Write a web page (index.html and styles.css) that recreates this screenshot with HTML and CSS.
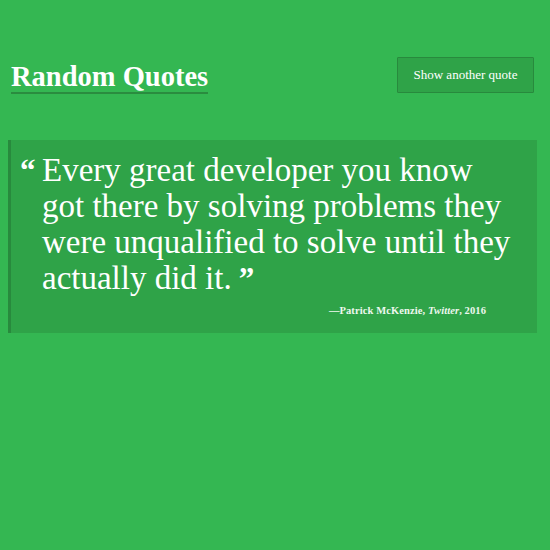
FILE: index.html
```html
<!DOCTYPE html>
<html lang="en">
<head>
<meta charset="utf-8">
<title>Random Quotes</title>
<link rel="stylesheet" href="styles.css">
</head>
<body>
<header class="top">
  <h1 class="title">Random Quotes</h1>
  <button class="btn" type="button">Show another quote</button>
</header>
<blockquote class="quote">
  <p class="quote-text"><span class="mark-open">“</span>Every great developer you know got there by solving problems they were unqualified to solve until they actually did it.<span class="mark-close">”</span></p>
  <footer class="cite">—Patrick McKenzie, <em>Twitter</em>, 2016</footer>
</blockquote>
</body>
</html>
```

FILE: styles.css
```css
html, body {
  margin: 0;
  padding: 0;
}
body {
  background: #34b752;
  color: #ffffff;
  font-family: "Liberation Serif", "DejaVu Serif", serif;
  width: 550px;
  height: 550px;
}
.top {
  display: flex;
  justify-content: space-between;
  align-items: flex-start;
  padding: 57px 16px 0 11px;
}
.title {
  margin: 5px 0 0 0;
  font-size: 28.5px;
  font-weight: bold;
  line-height: 30px;
  border-bottom: 2px solid #2a8c3f;
  padding-bottom: 0;
}
.btn {
  width: 137px;
  height: 36px;
  background: #2fa348;
  border: 1px solid #288a3d;
  border-radius: 1px;
  color: #ffffff;
  font-family: "Liberation Serif", "DejaVu Serif", serif;
  font-size: 13px;
  padding: 0;
}
.quote {
  margin: 46px 13px 0 8px;
  background: #2fa348;
  border-left: 3px solid #288a3d;
  padding: 12px 20px 17px 31px;
}
.quote-text {
  margin: 0;
  font-size: 33px;
  line-height: 36px;
}
.mark-open {
  display: inline-block;
  width: 22px;
  margin-left: -22px;
  font-weight: bold;
  font-size: 31px;
  line-height: 0;
}
.mark-close {
  font-weight: bold;
  font-size: 31px;
  line-height: 0;
  margin-left: 7px;
}
.cite {
  text-align: right;
  font-size: 10.5px;
  font-weight: bold;
  letter-spacing: 0.1px;
  padding-right: 31px;
  margin-top: 9px;
  color: #eef8ef;
}
.cite em {
  font-weight: bold;
}
```
